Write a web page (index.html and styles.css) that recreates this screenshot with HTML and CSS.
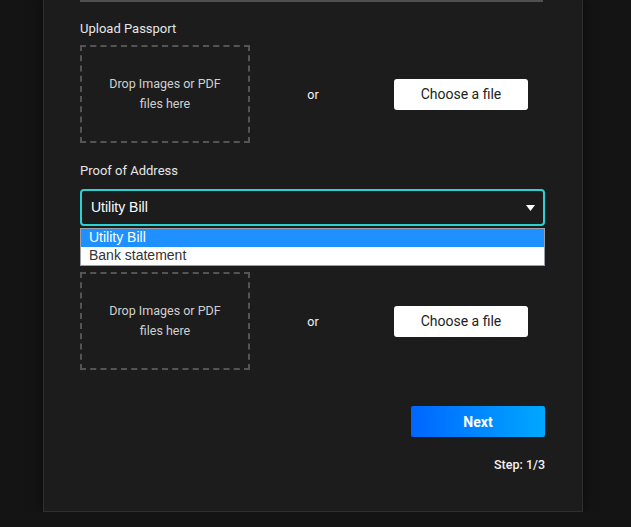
FILE: index.html
```html
<!DOCTYPE html>
<html lang="en">
<head>
<meta charset="utf-8">
<title>Verification</title>
<link rel="stylesheet" href="styles.css">
</head>
<body>
<div class="card">
  <div class="prev-input"></div>

  <div class="label first">Upload Passport</div>
  <div class="upload-row">
    <div class="dropzone">Drop Images or PDF<br>files here</div>
    <div class="or">or</div>
    <button class="choose">Choose a file</button>
  </div>

  <div class="label second">Proof of Address</div>
  <div class="select-wrap">
    <div class="select">
      <span>Utility Bill</span>
      <svg class="caret" width="9" height="6" viewBox="0 0 9 6"><path d="M0 0H9L4.5 6Z" fill="#fff"/></svg>
    </div>
    <ul class="menu">
      <li class="opt active">Utility Bill</li>
      <li class="opt">Bank statement</li>
    </ul>
  </div>

  <div class="upload-row lower">
    <div class="dropzone">Drop Images or PDF<br>files here</div>
    <div class="or">or</div>
    <button class="choose">Choose a file</button>
  </div>

  <div class="actions">
    <button class="next">Next</button>
    <div class="step">Step: 1/3</div>
  </div>
</div>
</body>
</html>
```

FILE: styles.css
```css
html, body {
  margin: 0;
  padding: 0;
  background: #141414;
  font-family: Roboto, "Liberation Sans", Arial, sans-serif;
}

.card {
  box-sizing: border-box;
  width: 540px;
  margin: -1px 0 0 43px;
  padding: 0 37px 38px 36px;
  background: #1c1c1c;
  border: 1px solid #2f2f2f;
  box-shadow: 0 0 12px rgba(0, 0, 0, 0.55);
}

.prev-input {
  height: 2px;
  width: 463px;
  background: #505050;
}

.label {
  color: #e6e6e6;
  font-size: 13px;
  line-height: 16px;
  margin-bottom: 9px;
}
.label.first { margin-top: 19px; margin-bottom: 8px; }
.label.second { margin-top: 20px; margin-bottom: 10px; }

.upload-row {
  display: flex;
  align-items: center;
}
.upload-row.lower { margin-top: 46px; }

.dropzone {
  box-sizing: border-box;
  width: 170px;
  height: 98px;
  border: 2px dashed #545454;
  display: flex;
  align-items: center;
  justify-content: center;
  text-align: center;
  color: #d0d0d0;
  font-size: 12.5px;
  line-height: 20px;
}

.or {
  width: 126px;
  text-align: center;
  color: #f2f2f2;
  font-size: 12.5px;
}

.choose {
  margin-left: 18px;
  width: 134px;
  height: 31px;
  border: none;
  border-radius: 3px;
  background: #ffffff;
  color: #222;
  font-family: Roboto, "Liberation Sans", Arial, sans-serif;
  font-size: 14px;
  padding: 0;
}

.select-wrap {
  position: relative;
}

.select {
  box-sizing: border-box;
  height: 37px;
  border: 2px solid #2ad2d4;
  border-radius: 4px;
  display: flex;
  align-items: center;
  justify-content: space-between;
  padding: 0 8px 0 9px;
  color: #fff;
  font-family: "Liberation Sans", Arial, sans-serif;
  font-size: 14px;
}
.select span { margin-top: -1px; }

.caret { display: block; margin-top: 1px; }

.menu {
  position: absolute;
  top: 39px;
  left: 0;
  width: 465px;
  box-sizing: border-box;
  margin: 0;
  padding: 0;
  list-style: none;
  border: 1px solid #9aa0a6;
  background: #fff;
  font-family: "Liberation Sans", Arial, sans-serif;
  font-size: 14px;
  z-index: 2;
}

.opt {
  height: 18px;
  line-height: 17px;
  padding-left: 8px;
  color: #333;
}
.opt.active {
  background: #1e90ff;
  color: #fff;
}

.actions {
  display: flex;
  flex-direction: column;
  align-items: flex-end;
  margin-top: 36px;
}

.next {
  width: 134px;
  height: 31px;
  border: none;
  border-radius: 2px;
  background: linear-gradient(90deg, #0066ff, #00a8ff);
  color: #fff;
  font-family: Roboto, "Liberation Sans", Arial, sans-serif;
  font-weight: 700;
  font-size: 14px;
  padding: 0;
}

.step {
  margin-top: 20px;
  color: #f2f2f2;
  font-size: 12.5px;
  font-weight: 500;
  line-height: 16px;
}
```
